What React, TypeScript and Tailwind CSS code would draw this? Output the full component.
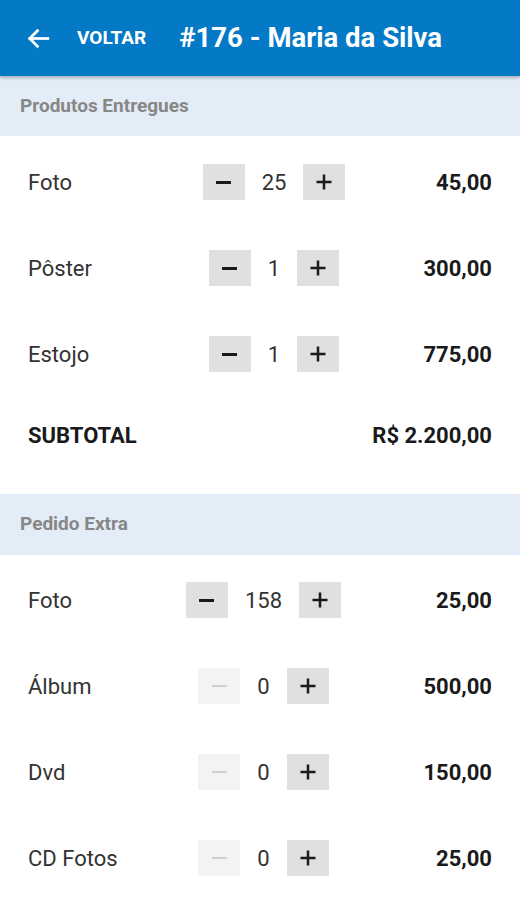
import React from "react";

type Item = { name: string; qty: number; price: string };

const s1: Item[] = [
  { name: "Foto", qty: 25, price: "45,00" },
  { name: "Pôster", qty: 1, price: "300,00" },
  { name: "Estojo", qty: 1, price: "775,00" },
];
const s2: Item[] = [
  { name: "Foto", qty: 158, price: "25,00" },
  { name: "Álbum", qty: 0, price: "500,00" },
  { name: "Dvd", qty: 0, price: "150,00" },
  { name: "CD Fotos", qty: 0, price: "25,00" },
];

function Minus({ disabled }: { disabled: boolean }) {
  return (
    <div
      className={`w-[42px] h-[36px] flex items-center justify-center ${
        disabled ? "bg-[#f3f3f3]" : "bg-[#e0e0e0]"
      }`}
    >
      <div
        className={`w-[15px] ${disabled ? "h-[2px] bg-[#d0d0d0]" : "h-[3px] bg-[#1a1a1a]"}`}
      />
    </div>
  );
}

function Plus() {
  return (
    <div className="w-[42px] h-[36px] flex items-center justify-center bg-[#e0e0e0]">
      <svg width="16" height="16" viewBox="0 0 16 16">
        <rect x="0.5" y="6.75" width="15" height="2.5" fill="#1a1a1a" />
        <rect x="6.75" y="0.5" width="2.5" height="15" fill="#1a1a1a" />
      </svg>
    </div>
  );
}

function Row({ item, cols }: { item: Item; cols: string }) {
  return (
    <div className={`h-[86px] grid items-center px-[28px] ${cols}`}>
      <div className="text-[22px] text-[#333333]">{item.name}</div>
      <div className="flex items-center justify-center">
        <Minus disabled={item.qty === 0} />
        <div className="px-[17px] text-[22px] text-[#333333]">{item.qty}</div>
        <Plus />
      </div>
      <div className="text-right text-[22px] font-bold text-[#1a1a1a]">{item.price}</div>
    </div>
  );
}

function Band({ title, h }: { title: string; h: string }) {
  return (
    <div className={`${h} bg-[#e2edf7] flex items-center px-[20px]`}>
      <span className="text-[19px] font-bold text-[#878787]">{title}</span>
    </div>
  );
}

export default function App() {
  return (
    <div
      className="w-[520px] h-[900px] overflow-hidden bg-white"
      style={{ fontFamily: "Roboto, 'Noto Sans', sans-serif" }}
    >
      <div className="h-[76px] bg-[#0479c6] flex items-center text-white shadow-[0_2px_3px_rgba(0,0,0,0.25)] relative z-10">
        <svg
          className="ml-[26px]"
          width="25"
          height="25"
          viewBox="0 0 24 24"
          fill="none"
          stroke="white"
          strokeWidth="2.6"
          strokeLinecap="square"
        >
          <path d="M21 12H4" />
          <path d="M11 4.5 3.5 12 11 19.5" />
        </svg>
        <span className="ml-[26px] text-[19px] font-bold">VOLTAR</span>
        <span className="ml-[33px] text-[27.5px] font-bold">#176 - Maria da Silva</span>
      </div>
      <Band title="Produtos Entregues" h="h-[60px]" />
      <div className="pt-[3px]">
        {s1.map((it) => (
          <Row key={it.name} item={it} cols="grid-cols-[175px_142px_1fr]" />
        ))}
        <div className="h-[76px] flex items-center justify-between px-[28px]">
          <span className="text-[22px] font-bold text-[#1a1a1a]">SUBTOTAL</span>
          <span className="text-[22px] font-bold text-[#1a1a1a]">R$ 2.200,00</span>
        </div>
      </div>
      <div className="h-[21px]" />
      <Band title="Pedido Extra" h="h-[61px]" />
      <div className="pt-[2px]">
        {s2.map((it) => (
          <Row key={it.name} item={it} cols="grid-cols-[158px_155px_1fr]" />
        ))}
      </div>
    </div>
  );
}
